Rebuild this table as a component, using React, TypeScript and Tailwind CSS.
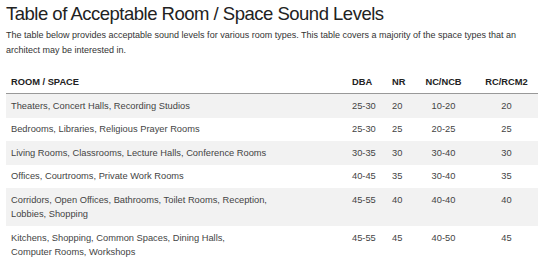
import React from "react";

const rows: [React.ReactNode, string, string, string, string][] = [
  ["Theaters, Concert Halls, Recording Studios", "25-30", "20", "10-20", "20"],
  ["Bedrooms, Libraries, Religious Prayer Rooms", "25-30", "25", "20-25", "25"],
  ["Living Rooms, Classrooms, Lecture Halls, Conference Rooms", "30-35", "30", "30-40", "30"],
  ["Offices, Courtrooms, Private Work Rooms", "40-45", "35", "30-40", "35"],
  [
    <>
      Corridors, Open Offices, Bathrooms, Toilet Rooms, Reception,
      <br />
      Lobbies, Shopping
    </>,
    "45-55",
    "40",
    "40-40",
    "40",
  ],
  [
    <>
      Kitchens, Shopping, Common Spaces, Dining Halls,
      <br />
      Computer Rooms, Workshops
    </>,
    "45-55",
    "45",
    "40-50",
    "45",
  ],
];

export default function App() {
  return (
    <div
      className="w-[540px] h-[264px] overflow-hidden bg-white pl-[6px] pr-[2px]"
      style={{ fontFamily: '"Liberation Sans", Arial, sans-serif' }}
    >
      <h1 className="pt-[1.5px] text-[18.5px] leading-[24px] tracking-[-0.5px] text-[#222]">
        Table of Acceptable Room / Space Sound Levels
      </h1>
      <p className="mt-[2.5px] text-[9px] leading-[15px] text-[#333]">
        The table below provides acceptable sound levels for various room types. This table covers a majority of the
        space types that an architect may be interested in.
      </p>
      <table className="mt-[16.5px] w-[532px] table-fixed border-collapse text-[9.3px] leading-[14.5px] text-[#444]">
        <colgroup>
          <col className="w-[346px]" />
          <col className="w-[40px]" />
          <col className="w-[23px]" />
          <col className="w-[60px]" />
          <col className="w-[63px]" />
        </colgroup>
        <thead>
          <tr className="border-b border-[#999] text-[#222]">
            <th className="text-left font-bold pl-[5px] pb-[4px] pt-0">ROOM / SPACE</th>
            <th className="text-left font-bold pb-[4px]">DBA</th>
            <th className="text-left font-bold pb-[4px]">NR</th>
            <th className="text-center font-bold pb-[4px] pr-[3px]">NC/NCB</th>
            <th className="text-center font-bold pb-[4px]">RC/RCM2</th>
          </tr>
        </thead>
        <tbody>
          {rows.map((r, i) => (
            <tr key={i} className={i % 2 === 0 ? "bg-[#f2f2f2]" : "bg-white"}>
              <td className="pl-[5px] py-[4.5px] align-top">{r[0]}</td>
              <td className="py-[4.5px] align-top">{r[1]}</td>
              <td className="py-[4.5px] align-top">{r[2]}</td>
              <td className="py-[4.5px] align-top text-center pr-[3px]">{r[3]}</td>
              <td className="py-[4.5px] align-top text-center">{r[4]}</td>
            </tr>
          ))}
        </tbody>
      </table>
    </div>
  );
}
